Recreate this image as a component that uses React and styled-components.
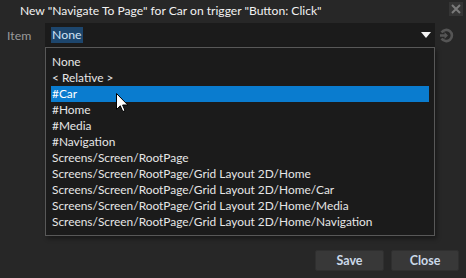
import React from "react";
import styled, { createGlobalStyle } from "styled-components";

const Global = createGlobalStyle`
  html, body { margin: 0; padding: 0; background: #272727; }
  body { font-family: Lato, "Noto Sans", sans-serif; overflow: hidden; }
`;

const Dialog = styled.div`
  position: relative;
  width: 466px;
  height: 278px;
  background: #272727;
  display: flex;
  flex-direction: column;
  color: #d8d8d8;
`;

const TitleBar = styled.div`
  height: 21px;
  display: flex;
  align-items: center;
  justify-content: space-between;
  padding: 0 3px 0 20px;
`;

const Title = styled.div`
  font-size: 12.1px;
  color: #f2f2f2;
  white-space: nowrap;
  margin-top: -1px;
`;

const CloseBtn = styled.div`
  width: 14px;
  height: 14px;
  background: #353535;
  display: flex;
  align-items: center;
  justify-content: center;
  margin-top: -3px;
`;

const Row = styled.div`
  display: flex;
  align-items: center;
  height: 24px;
  margin-top: 2px;
`;

const Label = styled.div`
  width: 38px;
  padding-left: 7px;
  font-size: 12.3px;
  color: #9a9a9a;
`;

const Combo = styled.div`
  width: 390px;
  height: 24px;
  background: #1b1b1b;
  display: flex;
  align-items: center;
  justify-content: space-between;
  padding: 0 4px 0 6px;
  box-sizing: border-box;
`;

const Selected = styled.span`
  font-size: 12.3px;
  line-height: 16px;
  background: #1d466d;
  color: #cfe2f5;
  padding: 0 1px;
`;

const SideIcon = styled.div`
  width: 18px;
  margin-left: 2px;
  display: flex;
  justify-content: center;
`;

const Spacer = styled.div`
  flex: 1;
`;

const Footer = styled.div`
  display: flex;
  justify-content: flex-end;
  gap: 7px;
  padding: 0 7px 7px 0;
`;

const Button = styled.div`
  width: ${(p) => p.w}px;
  height: 21px;
  box-sizing: border-box;
  background: #383838;
  border: 1px solid #2f2f2f;
  border-radius: 2px;
  display: flex;
  align-items: center;
  justify-content: center;
  font-size: 12.5px;
  font-weight: bold;
  color: #cbd9e8;
`;

const Popup = styled.div`
  position: absolute;
  left: 45px;
  top: 47px;
  width: 390px;
  height: 189px;
  box-sizing: border-box;
  background: #1b1b1b;
  border: 1px solid #585858;
  padding: 6px 5px 0 5px;
  box-shadow: 2px 3px 4px rgba(0, 0, 0, 0.35);
`;

const Item = styled.div`
  height: 16px;
  line-height: 16px;
  font-size: 11.9px;
  padding-left: 1px;
  white-space: nowrap;
  color: ${(p) => (p.active ? "#ffffff" : "#e6e6e6")};
  background: ${(p) => (p.active ? "#0a7ccf" : "transparent")};
`;

const Cursor = styled.svg`
  position: absolute;
  left: 116px;
  top: 93px;
`;

const items = [
  "None",
  "< Relative >",
  "#Car",
  "#Home",
  "#Media",
  "#Navigation",
  "Screens/Screen/RootPage",
  "Screens/Screen/RootPage/Grid Layout 2D/Home",
  "Screens/Screen/RootPage/Grid Layout 2D/Home/Car",
  "Screens/Screen/RootPage/Grid Layout 2D/Home/Media",
  "Screens/Screen/RootPage/Grid Layout 2D/Home/Navigation",
];

export default function App() {
  return (
    <>
      <Global />
      <Dialog>
        <TitleBar>
          <Title>New "Navigate To Page" for Car on trigger "Button: Click"</Title>
          <CloseBtn>
            <svg width="10" height="10" viewBox="0 0 10 10">
              <path d="M1 1L9 9M9 1L1 9" stroke="#7a7a7a" strokeWidth="2" />
            </svg>
          </CloseBtn>
        </TitleBar>
        <Row>
          <Label>Item</Label>
          <Combo>
            <Selected>None</Selected>
            <svg width="10" height="6" viewBox="0 0 10 6">
              <path d="M0 0H10L5 6Z" fill="#f4f4f4" />
            </svg>
          </Combo>
          <SideIcon>
            <svg width="15" height="15" viewBox="0 0 15 15">
              <path
                d="M2.6 4.5A5.6 5.6 0 1 1 2.6 10.5"
                fill="none"
                stroke="#555555"
                strokeWidth="2.6"
              />
              <path d="M1 6.3H5.5V4L9 7.5L5.5 11V8.7H1Z" fill="#555555" />
            </svg>
          </SideIcon>
        </Row>
        <Spacer />
        <Footer>
          <Button w={69}>Save</Button>
          <Button w={68}>Close</Button>
        </Footer>
        <Popup>
          {items.map((t) => (
            <Item key={t} active={t === "#Car"}>
              {t}
            </Item>
          ))}
        </Popup>
        <Cursor width="13" height="20" viewBox="0 0 13 20">
          <path
            d="M0.5 0.5V16.5L4.3 12.8L6.8 18.6L9 17.6L6.6 12H11.8Z"
            fill="#ffffff"
            stroke="#000000"
            strokeWidth="1"
          />
        </Cursor>
      </Dialog>
    </>
  );
}
